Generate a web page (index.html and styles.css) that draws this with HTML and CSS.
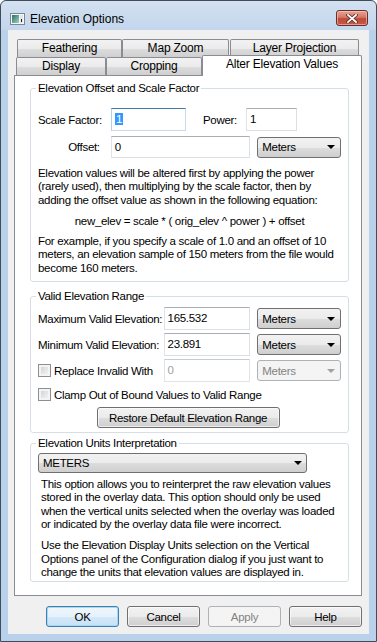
FILE: index.html
```html
<!DOCTYPE html>
<html>
<head>
<meta charset="utf-8">
<title>Elevation Options</title>
<link rel="stylesheet" href="styles.css">
</head>
<body>
<div class="window">
  <div class="titlebar">
    <svg class="app-icon" width="15" height="12" viewBox="0 0 15 12">
      <defs>
        <linearGradient id="ig" x1="0" y1="0" x2="1" y2="1">
          <stop offset="0" stop-color="#2f6f63"/>
          <stop offset="1" stop-color="#9fd2c2"/>
        </linearGradient>
      </defs>
      <rect x="0.5" y="0.5" width="14" height="11" fill="#f4f6f8" stroke="#7d8790"/>
      <rect x="2" y="2" width="7" height="8" fill="url(#ig)"/>
      <rect x="10" y="2" width="3" height="8" fill="#dfe6ec"/>
      <rect x="11" y="6" width="1" height="3" fill="#222"/>
    </svg>
    <span class="title">Elevation Options</span>
    <div class="close-btn">
      <svg width="12" height="9" viewBox="0 0 12 9">
        <path d="M2 1 L10 8 M10 1 L2 8" stroke="#5a2a26" stroke-width="3.4" stroke-linecap="square"/>
        <path d="M2 1 L10 8 M10 1 L2 8" stroke="#ffffff" stroke-width="1.8" stroke-linecap="square"/>
      </svg>
    </div>
  </div>
  <div class="client">
    <div class="tab-row back">
      <div class="tab t-feather">Feathering</div>
      <div class="tab t-zoom">Map Zoom</div>
      <div class="tab t-proj">Layer Projection</div>
    </div>
    <div class="tab-row front">
      <div class="tab t-display">Display</div>
      <div class="tab t-crop">Cropping</div>
      <div class="tab t-alter active">Alter Elevation Values</div>
    </div>
    <div class="panel">
      <div class="group g1">
        <div class="group-title">Elevation Offset and Scale Factor</div>
        <div class="row r-scale">
          <span class="lbl l-scale">Scale Factor:</span>
          <div class="edit focus e-scale"><span class="sel">1</span></div>
          <span class="lbl l-power">Power:</span>
          <div class="edit e-power">1</div>
        </div>
        <div class="row r-offset">
          <span class="lbl l-offset">Offset:</span>
          <div class="edit e-offset">0</div>
          <div class="combo c-units">Meters</div>
        </div>
        <p class="para p1">Elevation values will be altered first by applying the power (rarely used), then multiplying by the scale factor, then by adding the offset value as shown in the following equation:</p>
        <p class="para eq">new_elev = scale * ( orig_elev ^ power ) + offset</p>
        <p class="para p2">For example, if you specify a scale of 1.0 and an offset of 10 meters, an elevation sample of 150 meters from the file would become 160 meters.</p>
      </div>
      <div class="group g2">
        <div class="group-title">Valid Elevation Range</div>
        <div class="row r-range first">
          <span class="lbl l-range">Maximum Valid Elevation:</span>
          <div class="edit e-range">165.532</div>
          <div class="combo c-units">Meters</div>
        </div>
        <div class="row r-range">
          <span class="lbl l-range">Minimum Valid Elevation:</span>
          <div class="edit e-range">23.891</div>
          <div class="combo c-units">Meters</div>
        </div>
        <div class="row r-range">
          <span class="lbl l-range l-check"><span class="check"></span>Replace Invalid With</span>
          <div class="edit e-range disabled">0</div>
          <div class="combo c-units disabled">Meters</div>
        </div>
        <div class="row r-clamp">
          <span class="check"></span><span class="lbl">Clamp Out of Bound Values to Valid Range</span>
        </div>
        <div class="row r-restore">
          <div class="btn restore">Restore Default Elevation Range</div>
        </div>
      </div>
      <div class="group g3">
        <div class="group-title">Elevation Units Interpretation</div>
        <div class="combo c-interp">METERS</div>
        <p class="para p3">This option allows you to reinterpret the raw elevation values stored in the overlay data. This option should only be used when the vertical units selected when the overlay was loaded or indicated by the overlay data file were incorrect.</p>
        <p class="para p4">Use the Elevation Display Units selection on the Vertical Options panel of the Configuration dialog if you just want to change the units that elevation values are displayed in.</p>
      </div>
    </div>
    <div class="buttons">
      <div class="btn default">OK</div>
      <div class="btn">Cancel</div>
      <div class="btn disabled">Apply</div>
      <div class="btn">Help</div>
    </div>
  </div>
</div>
</body>
</html>
```
FILE: styles.css
```css
* { box-sizing: border-box; }
html, body { margin: 0; padding: 0; background: #ffffff; }
body {
  font-family: "Liberation Sans", Arial, sans-serif;
  font-size: 11px;
  color: #000;
}
.window {
  width: 377px;
  height: 642px;
  border: 1px solid #414c5a;
  border-radius: 6px 6px 0 0;
  background: linear-gradient(to bottom, #d3e1f1 0px, #c3d6ec 29px, #bad1ea 29px, #b9d1ea 100%);
  padding: 0 7px 7px;
  display: flex;
  flex-direction: column;
}
.titlebar {
  height: 29px;
  display: flex;
  align-items: flex-start;
}
.app-icon { margin: 12px 0 0 2px; flex: none; }
.title {
  font-family: "Liberation Sans", Arial, sans-serif;
  font-size: 12px;
  margin: 11px 0 0 5px;
  line-height: 14px;
  color: #000;
}
.close-btn {
  margin: 9px 1px 0 auto;
  width: 32px;
  height: 16px;
  border: 1px solid #6b2c2a;
  border-radius: 3px;
  background: linear-gradient(to bottom, #e8a493 0%, #d37863 45%, #bf4a36 55%, #c65a45 100%);
  box-shadow: inset 0 0 0 1px rgba(255,210,200,0.55);
  display: flex;
  align-items: center;
  justify-content: center;
}
.client {
  flex: 1;
  background: #f0f0f0;
  padding-top: 9px;
  display: flex;
  flex-direction: column;
}
.tab-row { display: flex; height: 18px; }
.tab-row.back { margin-left: 9px; }
.tab-row.front { margin-left: 8px; }
.tab {
  height: 18px;
  border: 1px solid #898c95;
  border-bottom: none;
  border-radius: 2px 2px 0 0;
  background: linear-gradient(to bottom, #f2f2f2 0%, #ebebeb 50%, #dddddd 51%, #cfcfcf 100%);
  text-align: center;
  line-height: 17px;
  font-size: 12px;
  letter-spacing: -0.2px;
}
.t-feather { width: 105px; }
.t-zoom { width: 107px; }
.t-proj { width: 129px; margin-left: 1px; }
.t-display { width: 90px; }
.t-crop { width: 96px; }
.t-alter { width: 160px; }
.tab.active {
  background: #ffffff;
  height: 21px;
  margin-top: -2px;
  margin-bottom: -1px;
  position: relative;
  z-index: 2;
  line-height: 16px;
}
.panel {
  margin-left: 6px;
  width: 348px;
  height: 521px;
  border: 1px solid #898c95;
  background: #ffffff;
  padding-top: 12px;
}
.group {
  margin-left: 15px;
  width: 319px;
  border: 1px solid #d5dfe5;
  border-radius: 3px;
  padding: 0 7px;
}
.group-title {
  margin: -7px 0 0 -2px;
  padding: 0 2px;
  height: 13px;
  line-height: 13px;
  background: #ffffff;
  width: fit-content;
  letter-spacing: -0.3px;
  font-size: 11.5px;
}
.lbl, .para, .edit, .combo, .btn { font-size: 11.5px; letter-spacing: -0.3px; }
.row { display: flex; align-items: center; }
.r-scale { margin-top: 13px; height: 23px; }
.r-offset { margin-top: 5px; height: 22px; }
.l-scale { width: 73px; }
.l-power { width: 43px; margin-left: 17px; }
.l-offset { width: 73px; text-align: right; padding-right: 11px; }
.edit {
  height: 23px;
  border: 1px solid #dbdfe6;
  border-top-color: #abadb3;
  border-left-color: #e2e3ea;
  background: #fff;
  padding: 3px 0 0 3px;
  line-height: 14px;
}
.edit.focus {
  border-color: #c5daed;
  border-top-color: #3d7bad;
  border-left-color: #b5cfe7;
}
.sel { background: #3399ff; color: #fff; padding: 0 1px; }
.e-scale { width: 75px; }
.e-power { width: 51px; }
.e-offset { width: 140px; height: 22px; }
.combo {
  height: 21px;
  border: 1px solid #707070;
  border-radius: 3px;
  background: linear-gradient(to bottom, #f2f2f2 0%, #ebebeb 50%, #dddddd 51%, #cfcfcf 100%);
  display: flex;
  align-items: center;
  justify-content: space-between;
  padding-left: 4px;
}
.combo::after {
  content: "";
  border-left: 4px solid transparent;
  border-right: 4px solid transparent;
  border-top: 4px solid #000;
  margin-right: 5px;
}
.c-units { width: 84px; margin-left: 7px; }
.combo.disabled {
  border-color: #adb2b5;
  background: #f4f4f4;
  color: #838383;
}
.combo.disabled::after { border-top-color: #a0a0a0; }
.para { margin: 0; line-height: 13.3px; }
.p1 { margin-top: 9px; }
.eq { margin-top: 8px; text-align: center; }
.p2 { margin-top: 7px; padding-bottom: 6px; }
.g2 { margin-top: 14px; }
.r-range { height: 23px; margin-top: 3px; }
.r-range.first { margin-top: 4px; }
.l-range { width: 126px; }
.l-check { display: flex; align-items: center; }
.e-range { width: 87px; }
.edit.disabled { color: #a0a0a0; border-color: #e0e3e8; border-top-color: #c8cbd0; }
.check {
  width: 13px;
  height: 13px;
  border: 1px solid #8e8f8f;
  background: linear-gradient(135deg, #cbcfd5 0%, #e6e8ea 60%, #f7f7f7 100%);
  box-shadow: inset 0 0 0 2px #f4f4f4;
  margin-right: 3px;
  flex: none;
}
.r-clamp { margin-top: 6px; height: 13px; }
.r-restore { margin-top: 6px; justify-content: center; padding-bottom: 4px; padding-right: 3px; }
.btn {
  height: 21px;
  border: 1px solid #707070;
  border-radius: 3px;
  background: linear-gradient(to bottom, #f2f2f2 0%, #ebebeb 50%, #dddddd 51%, #cfcfcf 100%);
  box-shadow: inset 0 0 0 1px rgba(255,255,255,0.6);
  display: flex;
  align-items: center;
  justify-content: center;
}
.restore { width: 183px; }
.g3 { margin-top: 10px; }
.c-interp { width: 269px; height: 20px; margin-top: 3px; }
.c-interp::after { margin-right: 4px; }
.p3 { margin-top: 5px; padding-left: 3px; }
.p4 { margin-top: 8px; padding-left: 3px; padding-bottom: 2px; }
.buttons {
  display: flex;
  justify-content: flex-end;
  gap: 8px;
  margin-top: 10px;
  padding-right: 7px;
}
.buttons .btn { width: 73px; }
.btn.default {
  border-color: #3c7fb1;
  box-shadow: inset 0 0 0 1px #a7d9f5;
  background: linear-gradient(to bottom, #f0f7fc 0%, #e5f1fb 50%, #d4e9f9 51%, #c8e1f6 100%);
}
.btn.disabled {
  border-color: #adb2b5;
  background: #f4f4f4;
  box-shadow: none;
  color: #838383;
}
```
